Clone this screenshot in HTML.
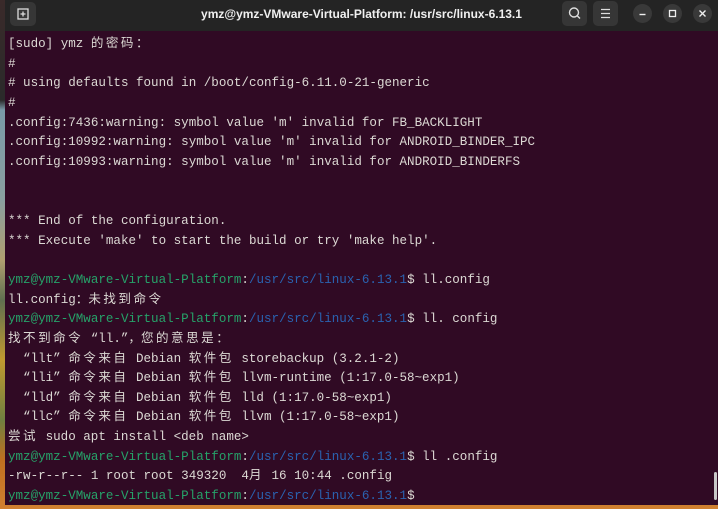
<!DOCTYPE html>
<html><head><meta charset="utf-8"><style>
html,body{margin:0;padding:0;width:718px;height:509px;overflow:hidden;background:linear-gradient(#3a2a2a 0,#2a2a2a 100px,#7a9aa8 110px,#8aa0a0 200px,#b0a070 260px,#607050 300px,#c09a30 360px,#708040 420px,#c07020 460px,#d08030 509px);}
.win{position:absolute;left:5px;top:0;width:713px;height:505px;background:#300a24;overflow:hidden;}
.tb{position:absolute;left:0;top:0;width:713px;height:31px;background:#242424;}
.btn{position:absolute;top:1px;width:25px;height:25px;border-radius:5px;background:#363636;}
.circ{position:absolute;top:4px;width:19px;height:19px;border-radius:50%;background:#393939;}
.title{position:absolute;left:0;width:713px;top:7px;text-align:center;color:#f0f0f0;font:bold 12px "Liberation Sans",sans-serif;}
.term{position:absolute;left:3px;top:35px;color:#dcd9d4;font-family:"Liberation Mono","Noto Sans CJK SC",monospace;font-size:12.55px;line-height:19.65px;white-space:pre;}
.g{color:#26a269}.b{color:#2a62b0}
.c{letter-spacing:2.5px}
.sb{position:absolute;right:1px;top:472px;width:3px;height:28px;background:#c8c8c8;border-radius:2px;}
</style></head><body>
<div class="win">
<div class="tb">
<div class="btn" style="left:5px;top:2px;width:26px;height:24px;">
<svg width="26" height="24" viewBox="0 0 26 24"><rect x="8" y="7" width="10" height="10" fill="none" stroke="#ddd" stroke-width="1.3"/><path d="M13 9.5v5M10.5 12h5" stroke="#ddd" stroke-width="1.3"/></svg></div>
<div class="title">ymz@ymz-VMware-Virtual-Platform: /usr/src/linux-6.13.1</div>
<div class="btn" style="left:557px"><svg width="25" height="25"><circle cx="12" cy="11.5" r="4.5" fill="none" stroke="#ddd" stroke-width="1.4"/><path d="M15.2 14.7L18 17.5" stroke="#ddd" stroke-width="1.4"/></svg></div>
<div class="btn" style="left:588px"><svg width="25" height="25"><path d="M8 8.5h9M8 12.5h9M8 16.5h9" stroke="#ddd" stroke-width="1.3"/></svg></div>
<div class="circ" style="left:628px"><svg width="19" height="19"><path d="M6.5 10.5h6" stroke="#eee" stroke-width="1.4"/></svg></div>
<div class="circ" style="left:658px"><svg width="19" height="19"><rect x="6.5" y="6.5" width="6" height="6" fill="none" stroke="#eee" stroke-width="1.3"/></svg></div>
<div class="circ" style="left:688px"><svg width="19" height="19"><path d="M6.5 6.5l6 6M12.5 6.5l-6 6" stroke="#eee" stroke-width="1.4"/></svg></div>
</div>
<div class="term">[sudo] ymz <span class="c">的密码</span>：
#
# using defaults found in /boot/config-6.11.0-21-generic
#
.config:7436:warning: symbol value 'm' invalid for FB_BACKLIGHT
.config:10992:warning: symbol value 'm' invalid for ANDROID_BINDER_IPC
.config:10993:warning: symbol value 'm' invalid for ANDROID_BINDERFS


*** End of the configuration.
*** Execute 'make' to start the build or try 'make help'.

<span class="g">ymz@ymz-VMware-Virtual-Platform</span>:<span class="b">/usr/src/linux-6.13.1</span>$ ll.config
ll.config：<span class="c">未找到命令</span>
<span class="g">ymz@ymz-VMware-Virtual-Platform</span>:<span class="b">/usr/src/linux-6.13.1</span>$ ll. config
<span class="c">找不到命令</span> “ll.”，<span class="c">您的意思是</span>：
  “llt” <span class="c">命令来自</span> Debian <span class="c">软件包</span> storebackup (3.2.1-2)
  “lli” <span class="c">命令来自</span> Debian <span class="c">软件包</span> llvm-runtime (1:17.0-58~exp1)
  “lld” <span class="c">命令来自</span> Debian <span class="c">软件包</span> lld (1:17.0-58~exp1)
  “llc” <span class="c">命令来自</span> Debian <span class="c">软件包</span> llvm (1:17.0-58~exp1)
<span class="c">尝试</span> sudo apt install &lt;deb name&gt;
<span class="g">ymz@ymz-VMware-Virtual-Platform</span>:<span class="b">/usr/src/linux-6.13.1</span>$ ll .config
-rw-r--r-- 1 root root 349320  4<span class="c">月</span> 16 10:44 .config
<span class="g">ymz@ymz-VMware-Virtual-Platform</span>:<span class="b">/usr/src/linux-6.13.1</span>$</div>
<div class="sb"></div>
</div>
</body></html>
